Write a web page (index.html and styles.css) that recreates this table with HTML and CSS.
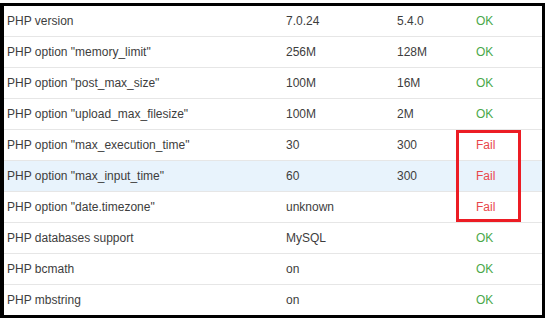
FILE: index.html
```html
<!DOCTYPE html>
<html>
<head>
<meta charset="utf-8">
<link rel="stylesheet" href="styles.css">
</head>
<body>
<div class="frame">
  <div class="table">
    <div class="row"><div class="c">PHP version</div><div class="c">7.0.24</div><div class="c">5.4.0</div><div class="c ok">OK</div></div>
    <div class="row"><div class="c">PHP option "memory_limit"</div><div class="c">256M</div><div class="c">128M</div><div class="c ok">OK</div></div>
    <div class="row"><div class="c">PHP option "post_max_size"</div><div class="c">100M</div><div class="c">16M</div><div class="c ok">OK</div></div>
    <div class="row"><div class="c">PHP option "upload_max_filesize"</div><div class="c">100M</div><div class="c">2M</div><div class="c ok">OK</div></div>
    <div class="row"><div class="c">PHP option "max_execution_time"</div><div class="c">30</div><div class="c">300</div><div class="c fail">Fail</div></div>
    <div class="row hl"><div class="c">PHP option "max_input_time"</div><div class="c">60</div><div class="c">300</div><div class="c fail">Fail</div></div>
    <div class="row"><div class="c">PHP option "date.timezone"</div><div class="c">unknown</div><div class="c"></div><div class="c fail">Fail</div></div>
    <div class="row"><div class="c">PHP databases support</div><div class="c">MySQL</div><div class="c"></div><div class="c ok">OK</div></div>
    <div class="row"><div class="c">PHP bcmath</div><div class="c">on</div><div class="c"></div><div class="c ok">OK</div></div>
    <div class="row"><div class="c">PHP mbstring</div><div class="c">on</div><div class="c"></div><div class="c ok">OK</div></div>
  </div>
  <div class="mark"></div>
</div>
</body>
</html>
```
FILE: styles.css
```css
html, body {
  margin: 0;
  padding: 0;
  background: #fff;
}
body {
  font-family: "Liberation Sans", Arial, sans-serif;
  font-size: 12px;
  color: #3d3d3d;
}
.frame {
  position: relative;
  margin-top: 3px;
  width: 538px;
  height: 309px;
  border: 3px solid #000;
  border-left-width: 4px;
  overflow: hidden;
}
.table {
  display: flex;
  flex-direction: column;
}
.row {
  display: grid;
  grid-template-columns: 279px 111px 79px 1fr;
  height: 31px;
  border-top: 1px solid #e6e6e6;
  box-sizing: border-box;
}
.row:first-child {
  border-top: none;
  height: 30px;
}
.row.hl {
  background: #e8f3fc;
}
.c {
  padding-left: 3px;
  display: flex;
  align-items: center;
  white-space: nowrap;
}
.ok {
  color: #4aa84a;
}
.fail {
  color: #e8474a;
}
.mark {
  position: absolute;
  left: 452px;
  top: 124px;
  width: 59px;
  height: 86px;
  border: 3px solid #ec1c24;
}
```
